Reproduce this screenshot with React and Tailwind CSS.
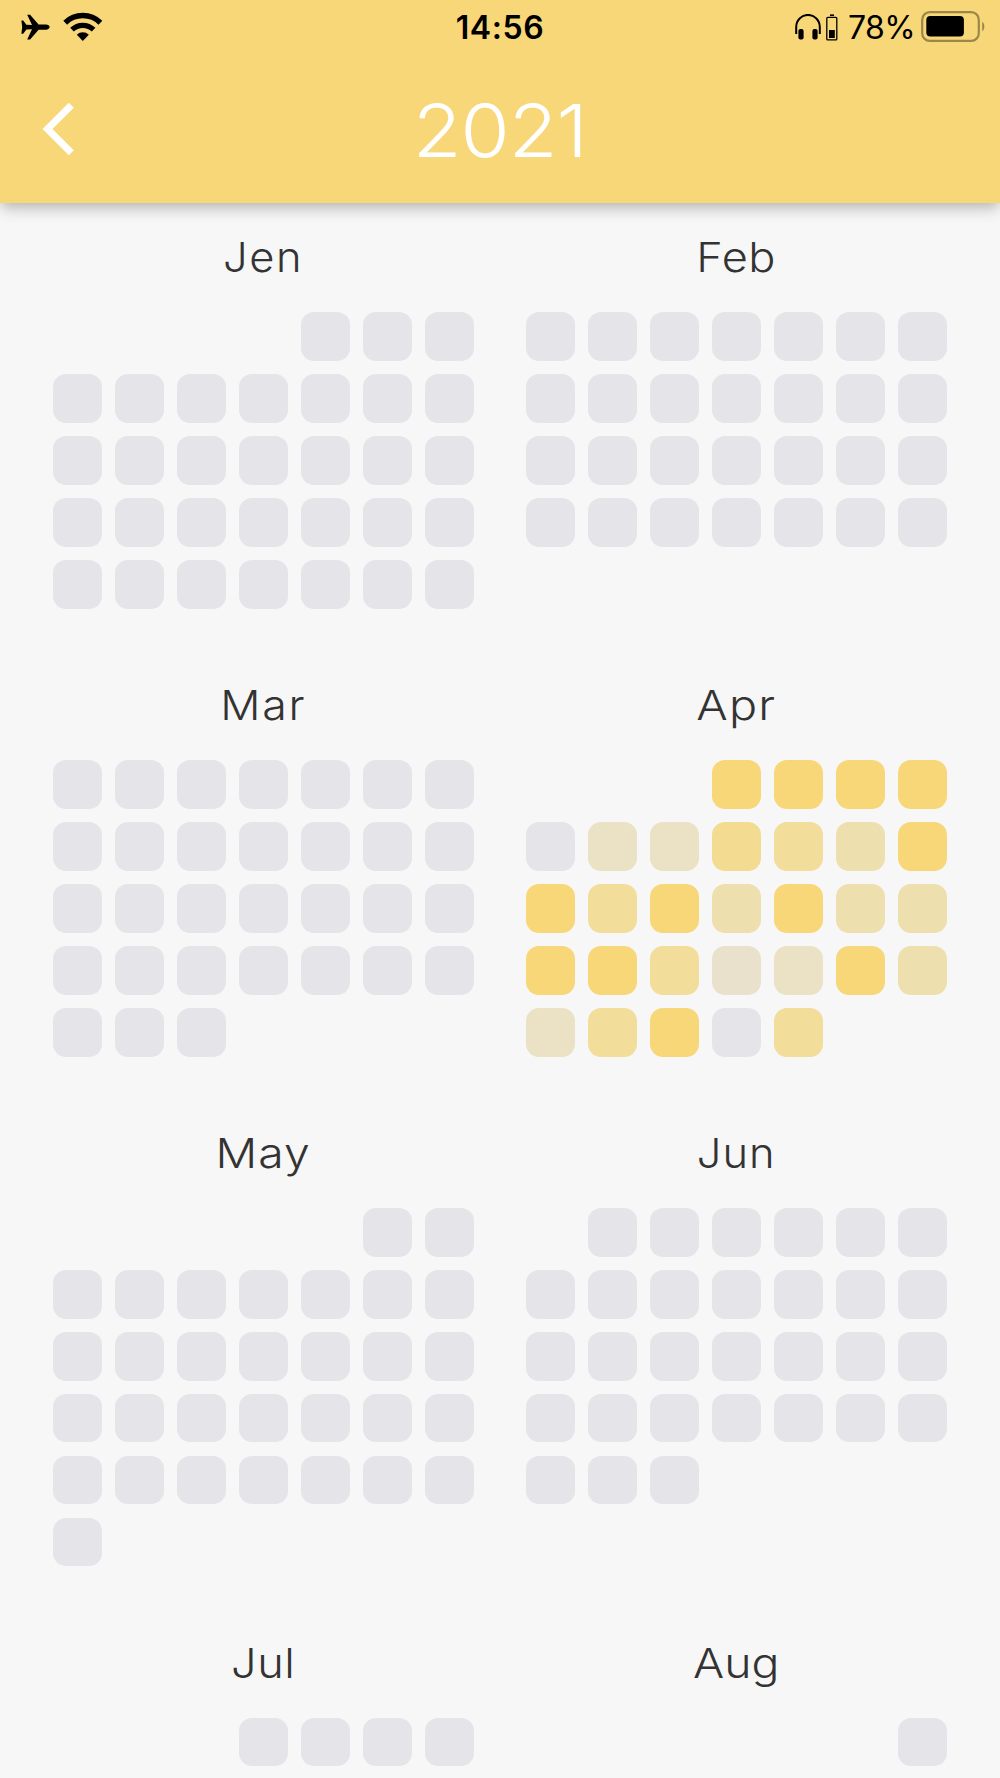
const YEAR = 2021;

// offset: empty cells before day 1 (weeks start on Monday)
const months = [
  { name: "Jen", offset: 4, days: 31, title: "tracking-[1.5px] scale-x-[1.06]" },
  { name: "Feb", offset: 0, days: 28, title: "tracking-[0.5px] scale-x-[1.1]" },
  { name: "Mar", offset: 0, days: 31, title: "tracking-[1.5px] scale-x-[1.09]" },
  {
    name: "Apr",
    offset: 3,
    days: 30,
    title: "tracking-[1px] scale-x-[1.14]",
    levels: [
      5, 5, 5, 5,
      0, 1, 1, 4, 3, 2, 5,
      5, 3, 5, 2, 5, 2, 2,
      5, 5, 3, 6, 1, 5, 2,
      1, 3, 5, 0, 3,
    ],
  },
  { name: "May", offset: 5, days: 31, title: "tracking-[1px] scale-x-[1.13]" },
  { name: "Jun", offset: 1, days: 30, title: "tracking-[1px] scale-x-[1.06]" },
  { name: "Jul", offset: 3, days: 31, title: "tracking-[0.5px] scale-x-[1.1]" },
  { name: "Aug", offset: 6, days: 31, title: "tracking-[0px] scale-x-[1.13]" },
];

const levelColors = {
  0: "bg-[#e5e4e9]",
  1: "bg-[#ebe1c5]",
  2: "bg-[#eedfaf]",
  3: "bg-[#f2dd9a]",
  4: "bg-[#f3db92]",
  5: "bg-[#f8d778]",
  6: "bg-[#e9e1cc]",
};

function StatusBar() {
  return (
    <div className="grid h-[54px] grid-cols-[1fr_auto_1fr] items-center pr-[15px] pl-[21px] text-black">
      <div className="flex items-center gap-[13px]">
        <svg width="29" height="26" viewBox="0 0 29 26" fill="black">
          <path d="M0.4 6.5H2.2L5.4 10.7L11 11L6.2 0.8H9.1L17.6 10.6H25C27 10.6 28.6 11.8 28.6 13.1C28.6 14.5 27 15.7 25 15.7H17.6L9.1 25.5H6.2L11 15.3L5.4 15.6L2.2 19.8H0.4L1.2 13.1Z" />
        </svg>
        <svg width="40" height="30" viewBox="0 0 40 30" fill="none" stroke="black">
          <path d="M2.2 10.7A25.2 25.2 0 0 1 37.4 10.7" strokeWidth="5.4" />
          <path d="M9 17.7A15.4 15.4 0 0 1 30.6 17.7" strokeWidth="5.2" />
          <path d="M13.8 22.7A8.7 8.7 0 0 1 25.8 22.7L19.8 29Z" fill="black" stroke="none" />
        </svg>
      </div>

      <span className="mr-[6px] pt-[2px] text-center text-[32px] leading-none font-semibold tracking-[0.6px]">
        14:56
      </span>

      <div className="flex items-center justify-end">
        <svg width="26" height="26" viewBox="0 0 26 26" fill="none">
          <path d="M1.2 20V13A11.7 12 0 0 1 24.8 13V20" stroke="black" strokeWidth="2" />
          <rect x="3.4" y="15" width="5.2" height="10.4" rx="2" fill="black" />
          <rect x="17.4" y="15" width="5.2" height="10.4" rx="2" fill="black" />
        </svg>
        <svg className="ml-[5px]" width="12" height="27" viewBox="0 0 12 27" fill="none">
          <path d="M4 1.2H8" stroke="black" strokeWidth="1.6" />
          <rect x="0.8" y="3.3" width="10" height="22.6" rx="1" stroke="black" strokeWidth="1.3" />
          <rect x="3" y="16" width="5.8" height="8" fill="black" />
        </svg>
        <span className="ml-[10px] pt-[2px] text-[32px] leading-none tracking-[-0.6px]">78%</span>
        <svg className="ml-[6px]" width="64" height="32" viewBox="0 0 64 32" fill="none">
          <rect x="1.2" y="1.2" width="56.6" height="28.6" rx="7.5" stroke="#9b8748" strokeWidth="2.2" />
          <rect x="5.3" y="5" width="37.6" height="20.5" rx="4" fill="black" />
          <path d="M61.2 10.7C64 12.5 64 18.5 61.2 20.3Z" fill="#9b8748" />
        </svg>
      </div>
    </div>
  );
}

function Header() {
  return (
    <header className="relative z-10 h-[203px] bg-[#f8d778] shadow-[0_5px_11px_-3px_rgba(0,0,0,0.16),0_9px_13px_rgba(0,0,0,0.08),0_3px_20px_rgba(0,0,0,0.08)]">
      <StatusBar />
      <div className="grid grid-cols-[1fr_auto_1fr] items-center px-[42px] pt-[37px]">
        <button className="mb-[4px] w-[34px]" aria-label="Back">
          <svg width="34" height="56" viewBox="0 0 34 56" fill="none">
            <path d="M29.3 4.2L5.5 28L29.3 51.8" stroke="white" strokeWidth="7" />
          </svg>
        </button>
        <h1 className="scale-x-[1.09] text-[73px] leading-[80px] font-[340] tracking-[-1px] text-white">
          {YEAR}
        </h1>
      </div>
    </header>
  );
}

function Month({ name, offset, days, title, levels = [] }) {
  return (
    <section>
      <h2 className={`mb-[24px] text-center text-[41px] leading-[62px] font-light text-[#333] ${title}`}>
        {name}
      </h2>
      <div className="grid grid-cols-7 gap-[13.3px]">
        {Array.from({ length: offset }, (_, i) => (
          <div key={`empty-${i}`} />
        ))}
        {Array.from({ length: days }, (_, i) => (
          <div
            key={i}
            className={`h-[48.7px] rounded-[13px] ${levelColors[levels[i] ?? 0]}`}
          />
        ))}
      </div>
    </section>
  );
}

export default function App() {
  return (
    <div className="h-[1778px] w-[1000px] overflow-hidden bg-[#f7f7f7] font-[Inter,sans-serif]">
      <Header />
      <main className="grid grid-cols-2 gap-x-[52.4px] gap-y-[65.3px] px-[53.4px] pt-[23px]">
        {months.map((month) => (
          <Month key={month.name} {...month} />
        ))}
      </main>
    </div>
  );
}
